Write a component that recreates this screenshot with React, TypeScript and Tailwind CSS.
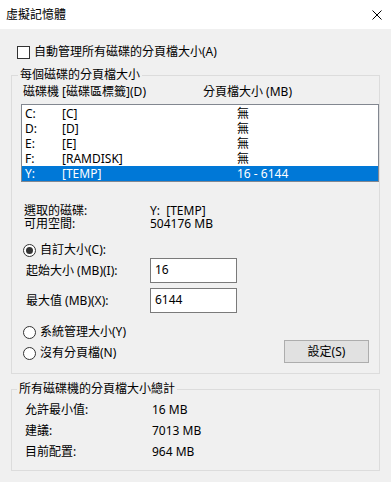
const drives = [
  { letter: "C:", label: "[C]", size: "無" },
  { letter: "D:", label: "[D]", size: "無" },
  { letter: "E:", label: "[E]", size: "無" },
  { letter: "F:", label: "[RAMDISK]", size: "無" },
  { letter: "Y:", label: "[TEMP]", size: "16 - 6144", selected: true },
];

const Radio = ({ checked, label }: { checked?: boolean; label: string }) => (
  <div className="flex items-center h-[16px]">
    <span className="w-[13px] h-[13px] rounded-full border border-[#333] bg-white flex items-center justify-center">
      {checked && <span className="w-[7px] h-[7px] rounded-full bg-[#333]" />}
    </span>
    <span className="ml-[4px]">{label}</span>
  </div>
);

export default function App() {
  return (
    <div
      className="w-[391px] h-[482px] bg-[#f0f0f0] text-[12px] leading-[16px] text-black overflow-hidden"
      style={{ fontFamily: '"Noto Sans", "Noto Sans CJK TC", sans-serif' }}
    >
      <div className="h-[29px] bg-white flex items-center justify-between pl-[6px] pr-[9px]">
        <span>虛擬記憶體</span>
        <svg width="10" height="10" viewBox="0 0 10 10" className="text-black">
          <path d="M0.5 0.5 L9.5 9.5 M9.5 0.5 L0.5 9.5" stroke="currentColor" strokeWidth="1" />
        </svg>
      </div>

      <div className="px-[11px]">
        <div className="mt-[15px] ml-[6px] flex items-center h-[16px]">
          <span className="w-[13px] h-[13px] border border-[#333] bg-white" />
          <span className="ml-[4px]">自動管理所有磁碟的分頁檔大小(A)</span>
        </div>

        <fieldset className="mt-[7px] border border-[#dcdcdc] pb-[10px]">
          <legend className="ml-[6px] px-[2px] h-[16px]">每個磁碟的分頁檔大小</legend>
          <div className="mt-[1px] h-[16px] flex pl-[11px]">
            <span className="w-[180px]">磁碟機 [磁碟區標籤](D)</span>
            <span>分頁檔大小 (MB)</span>
          </div>
          <div className="mt-[4px] ml-[9px] h-[78px] border border-[#828790] bg-white pt-[1px]">
            {drives.map((d) => (
              <div
                key={d.letter}
                className={`h-[15px] leading-[15px] flex pl-[3px] ${
                  d.selected ? "bg-[#0078d7] text-white" : "text-black"
                }`}
              >
                <span className="w-[37px]">{d.letter}</span>
                <span className="w-[175px]">{d.label}</span>
                <span>{d.size}</span>
              </div>
            ))}
          </div>

          <div className="mt-[22px] pl-[12px] leading-[13px]">
            <div className="flex">
              <span className="w-[126px]">選取的磁碟:</span>
              <span className="whitespace-pre">Y:  [TEMP]</span>
            </div>
            <div className="flex">
              <span className="w-[126px]">可用空間:</span>
              <span>504176 MB</span>
            </div>
          </div>

          <div className="mt-[12px] pl-[11px]">
            <Radio checked label="自訂大小(C):" />
          </div>
          <div className="pl-[14px]">
            <div className="flex items-center h-[25px]">
              <span className="w-[124px]">起始大小 (MB)(I):</span>
              <div className="w-[87px] h-[25px] border border-[#7a7a7a] bg-white pl-[4px] leading-[22px]">16</div>
            </div>
            <div className="mt-[5px] flex items-center h-[25px]">
              <span className="w-[124px]">最大值 (MB)(X):</span>
              <div className="w-[87px] h-[25px] border border-[#7a7a7a] bg-white pl-[4px] leading-[22px]">6144</div>
            </div>
          </div>

          <div className="mt-[11px] pl-[11px]">
            <Radio label="系統管理大小(Y)" />
          </div>
          <div className="pl-[11px] pr-[10px] flex justify-between items-start">
            <div className="mt-[5px]">
              <Radio label="沒有分頁檔(N)" />
            </div>
            <button className="w-[85px] h-[23px] bg-[#e1e1e1] border border-[#adadad] leading-[20px]">
              設定(S)
            </button>
          </div>
        </fieldset>

        <fieldset className="mt-[7px] border border-[#dcdcdc] pb-[8px]">
          <legend className="ml-[5px] px-[2px] h-[16px]">所有磁碟機的分頁檔大小總計</legend>
          <div className="mt-[2px] pl-[13px]">
            <div className="flex h-[21px] items-center">
              <span className="w-[127px]">允許最小值:</span>
              <span>16 MB</span>
            </div>
            <div className="flex h-[21px] items-center">
              <span className="w-[127px]">建議:</span>
              <span>7013 MB</span>
            </div>
            <div className="flex h-[21px] items-center">
              <span className="w-[127px]">目前配置:</span>
              <span>964 MB</span>
            </div>
          </div>
        </fieldset>
      </div>
    </div>
  );
}
